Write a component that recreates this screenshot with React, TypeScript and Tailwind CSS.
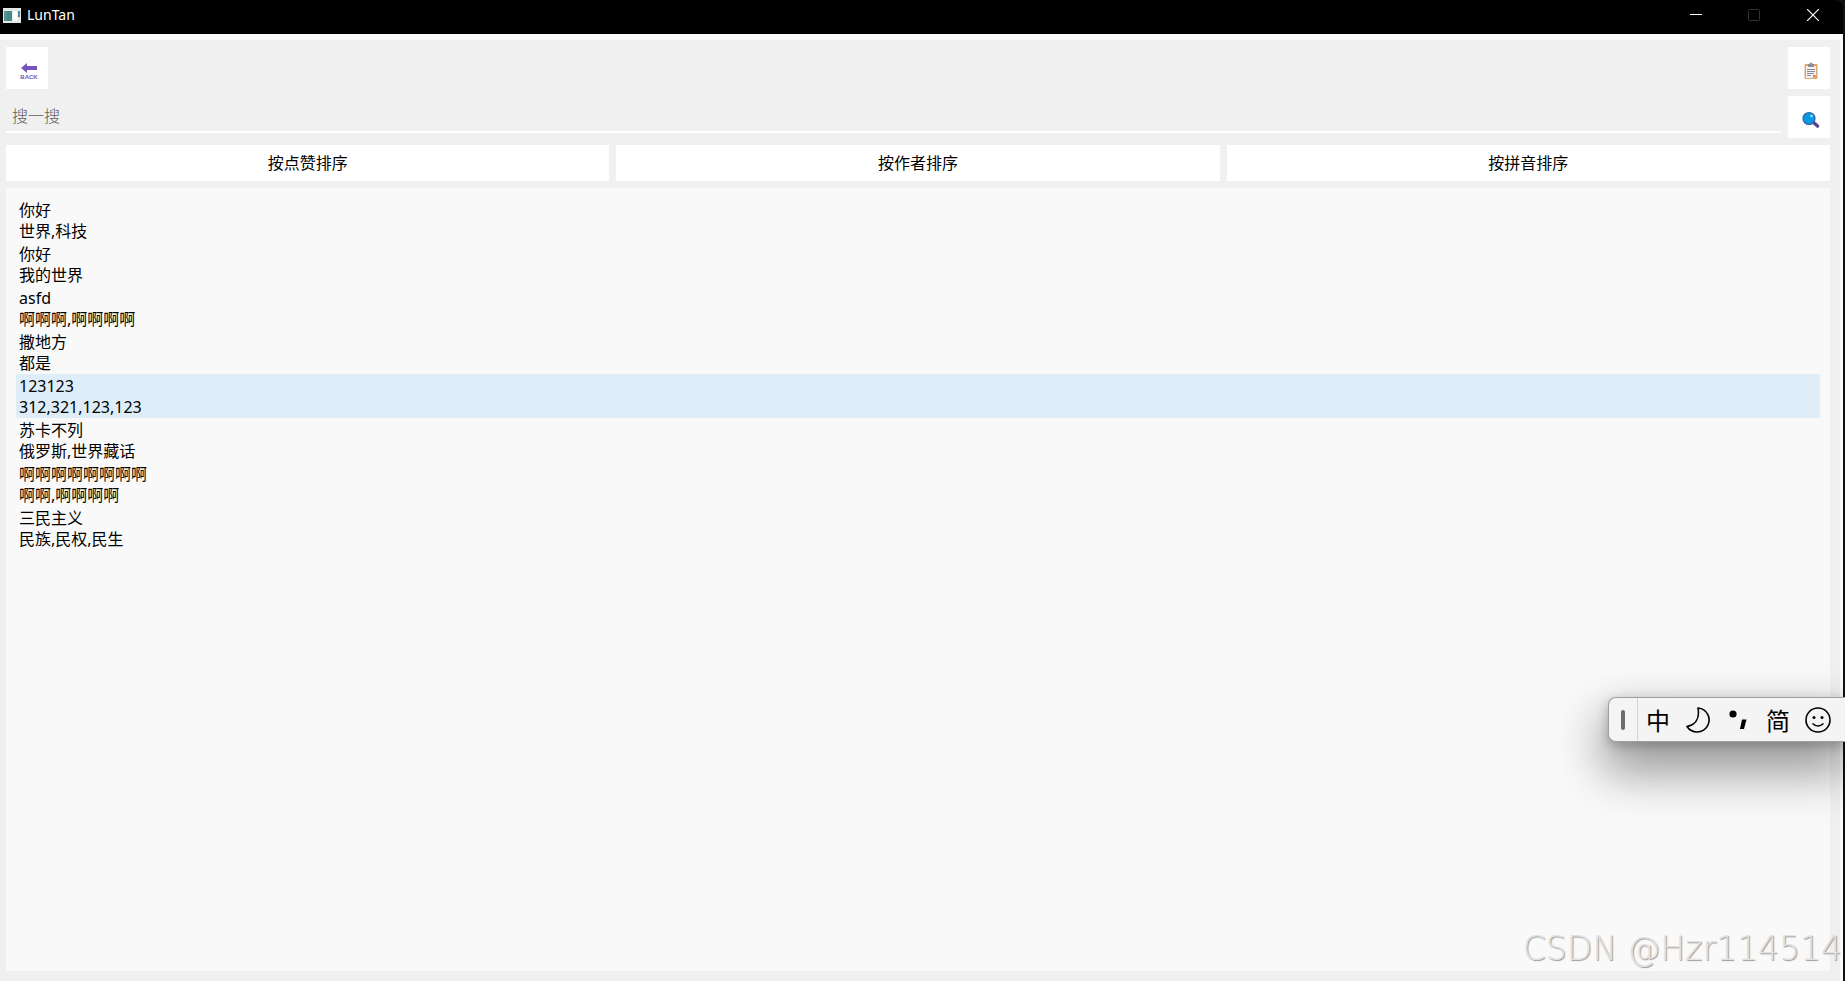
import React from "react";

type Post = {
  id: number;
  title: string;
  tags: string;
};

const posts: Post[] = [
  { id: 1, title: "你好", tags: "世界,科技" },
  { id: 2, title: "你好", tags: "我的世界" },
  { id: 3, title: "asfd", tags: "啊啊啊,啊啊啊啊" },
  { id: 4, title: "撒地方", tags: "都是" },
  { id: 5, title: "123123", tags: "312,321,123,123" },
  { id: 6, title: "苏卡不列", tags: "俄罗斯,世界藏话" },
  { id: 7, title: "啊啊啊啊啊啊啊啊", tags: "啊啊,啊啊啊啊" },
  { id: 8, title: "三民主义", tags: "民族,民权,民生" },
];

const sortOptions = ["按点赞排序", "按作者排序", "按拼音排序"];

function TitleBar() {
  return (
    <header className="flex h-[34px] items-start justify-between rounded-tr-lg bg-black text-white">
      <div className="flex h-[30px] items-center gap-[6px] pl-[3px]">
        <svg width="18" height="15" viewBox="0 0 18 15">
          <rect width="18" height="15" fill="#e4e8e8" />
          <rect x="1" y="3" width="8" height="10" fill="#3f8f85" />
          <rect x="1" y="3" width="3" height="10" fill="#5a8fa0" />
          <rect x="10" y="3" width="4" height="10" fill="#ffffff" />
          <rect x="15" y="3" width="2" height="6" fill="#4f8f8c" />
        </svg>
        <h1 className="text-sm">LunTan</h1>
      </div>
      <div className="flex h-[30px]">
        <button aria-label="最小化" className="flex w-[58px] items-center justify-center">
          <svg width="12" height="12" viewBox="0 0 12 12">
            <path d="M0 5.5h12" stroke="#fff" />
          </svg>
        </button>
        <button aria-label="最大化" disabled className="flex w-[58px] items-center justify-center">
          <svg width="12" height="12" viewBox="0 0 12 12">
            <rect x=".5" y=".5" width="11" height="11" rx="1" fill="none" stroke="#333" />
          </svg>
        </button>
        <button aria-label="关闭" className="flex w-[60px] items-center justify-center">
          <svg width="12" height="12" viewBox="0 0 12 12">
            <path d="M0 0l12 12M12 0L0 12" stroke="#fff" strokeWidth="1.2" />
          </svg>
        </button>
      </div>
    </header>
  );
}

function BackIcon() {
  return (
    <svg width="18" height="18" viewBox="0 0 18 18">
      <path d="M1 6l6-5v3h10v4H7v3z" fill="#7556bd" />
      <text
        x="9"
        y="17"
        textAnchor="middle"
        className="fill-[#7556bd] font-['Liberation_Sans',sans-serif] text-[6px] font-bold"
      >
        BACK
      </text>
    </svg>
  );
}

function ClipboardIcon() {
  return (
    <svg width="16" height="18" viewBox="0 0 16 18">
      <rect x="1.5" y="2" width="13" height="15" rx="1" fill="#e0a76c" />
      <path d="M3 4h10v9l-3 3H3z" fill="#f5f1f5" />
      <path d="M10 16v-3h3z" fill="#c98549" />
      <path d="M5 2h1.500a1.500 1.500 0 0 1 3 0H11v3H5z" fill="#8f8c92" />
      <path d="M4 7.500h8M4 9.500h8M4 11.500h7M4 13.500h4" stroke="#8b8794" />
    </svg>
  );
}

function SearchIcon() {
  return (
    <svg width="18" height="18" viewBox="0 0 18 18">
      <path d="M11.500 11.500l4 3.600" stroke="#59478d" strokeWidth="3.400" strokeLinecap="round" />
      <circle cx="7" cy="7.500" r="6" fill="#0799e2" stroke="#37609d" strokeWidth="1.200" />
      <circle cx="9.500" cy="5" r="1.200" fill="#b5e5ff" />
    </svg>
  );
}

function InputMethodBar() {
  return (
    <div className="absolute top-[697px] right-0 flex h-[45px] items-center rounded-l-lg border border-r-0 border-[#a0a0a0] bg-[#f4f4f4] text-black shadow-[0_24px_48px_6px_rgba(0,0,0,0.4),0_4px_12px_rgba(0,0,0,0.25)]">
      <div className="flex h-full w-[29px] items-center justify-center border-r border-[#d4d4d4]">
        <div className="h-5 w-1 rounded-full bg-[#6b6b6b]" />
      </div>
      <button className="w-10 pt-[2px] text-2xl leading-8">中</button>
      <button aria-label="半角" className="flex w-10 justify-center">
        <svg width="24" height="26" viewBox="0 0 24 26" fill="none" stroke="#000" strokeWidth="1.600">
          <path d="M12 1a12 12 0 1 1-11 18.500C9 18 14 12 12 1z" strokeLinejoin="round" />
        </svg>
      </button>
      <button aria-label="中文标点" className="flex w-10 justify-center">
        <svg width="18" height="20" viewBox="0 0 18 20">
          <circle cx="4" cy="4" r="3.600" />
          <path d="M13 9.500h4.500L15 19h-4z" />
        </svg>
      </button>
      <button className="w-10 pt-[2px] text-2xl leading-8">简</button>
      <button aria-label="表情" className="flex w-10 justify-center">
        <svg width="26" height="26" viewBox="0 0 26 26" fill="none" stroke="#000" strokeWidth="1.600">
          <circle cx="13" cy="13" r="12" />
          <circle cx="9" cy="10.500" r="1.500" fill="#000" stroke="none" />
          <circle cx="17" cy="10.500" r="1.500" fill="#000" stroke="none" />
          <path d="M7.500 16.500q5.500 5 11 0" />
        </svg>
      </button>
      <div className="w-[7px]" />
    </div>
  );
}

export default function App() {
  const [selected, setSelected] = React.useState(5);

  return (
    <div className="relative flex min-h-screen flex-col overflow-hidden bg-[#111] pr-[2px] font-['Noto_Sans','Noto_Sans_CJK_SC',sans-serif] text-black">
      <TitleBar />
      <main className="flex grow flex-col gap-[7px] border-t-[6px] border-r-[3px] border-[#fafafa] bg-[#f0f0f0] pt-[7px] pr-[10px] pb-[10px] pl-[6px]">
        <div className="flex justify-between">
          <button aria-label="返回" className="flex size-[42px] items-center justify-center bg-white pt-1.5 pl-1">
            <BackIcon />
          </button>
          <button aria-label="发帖" className="flex size-[42px] items-center justify-center bg-white pt-1.5 pl-1">
            <ClipboardIcon />
          </button>
        </div>
        <form className="flex items-start gap-[7px]" onSubmit={(e) => e.preventDefault()}>
          <input
            type="text"
            aria-label="搜一搜"
            placeholder="搜一搜"
            className="h-[37px] grow border-b-2 border-white bg-transparent px-[6px] pt-1 text-base font-light outline-none placeholder:text-[#606060]"
          />
          <button aria-label="搜索" className="flex size-[42px] items-center justify-center bg-white pt-1.5 pl-1">
            <SearchIcon />
          </button>
        </form>
        <div className="grid grid-cols-3 gap-[7px]">
          {sortOptions.map((option) => (
            <button key={option} className="h-9 bg-white text-base leading-6">
              {option}
            </button>
          ))}
        </div>
        <ul className="grow bg-[#f9f9f9] px-[10px] py-[10px] text-base leading-[21px]">
          {posts.map((post) => (
            <li key={post.id}>
              <button
                onClick={() => setSelected(post.id)}
                className={
                  selected === post.id
                    ? "block h-11 w-full rounded-xs bg-[#dfedf8] px-[3px] pt-[2px] text-left"
                    : "block h-11 w-full px-[3px] pt-[2px] text-left"
                }
              >
                <span className="block">{post.title}</span>
                <span className="block">{post.tags}</span>
              </button>
            </li>
          ))}
        </ul>
      </main>
      <InputMethodBar />
      <p className="absolute right-[3px] bottom-[14px] font-['DejaVu_Sans',sans-serif] text-[33px] leading-9 font-extralight text-[#e2e2e2] [text-shadow:1px_1px_1px_#999]">
        CSDN @Hzr114514
      </p>
    </div>
  );
}
